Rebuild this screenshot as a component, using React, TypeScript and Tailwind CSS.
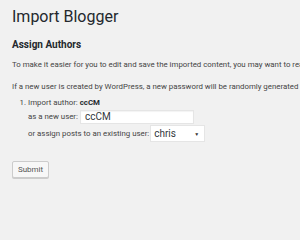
export default function App() {
  return (
    <div className="w-[300px] h-[240px] overflow-hidden bg-[#f1f1f1] text-[#444] font-['Roboto',sans-serif]">
      <div className="pl-3 pt-[7px]">
        <h1 className="text-[16px] leading-[20px] text-[#23282d] whitespace-nowrap">Import Blogger</h1>
        <h2 className="mt-[12px] text-[10px] leading-[12px] font-bold text-[#23282d] whitespace-nowrap">Assign Authors</h2>
        <p className="mt-[9px] text-[7.85px] leading-[10px] whitespace-nowrap overflow-hidden">
          To make it easier for you to edit and save the imported content, you may want to reassign the author of the imported item to an existing user of this site.
        </p>
        <p className="mt-[12px] text-[7.85px] leading-[10px] whitespace-nowrap overflow-hidden">
          If a new user is created by WordPress, a new password will be randomly generated and the new user's role will be set as subscriber.
        </p>
        <ol className="mt-[6px] pl-[16px] text-[7.85px] leading-[10px] list-decimal">
          <li className="whitespace-nowrap">
            Import author: <strong className="text-[#23282d]">ccCM</strong>
            <div className="mt-[2px] flex items-center gap-[2px]">
              <span>as a new user:</span>
              <div className="w-[114px] h-[14px] bg-white border border-[#e5e5e5] shadow-[inset_0_1px_1px_rgba(0,0,0,0.05)] flex items-center px-[4px] text-[10px] text-[#32373c]">
                ccCM
              </div>
            </div>
            <div className="mt-[1px] flex items-center gap-[1px]">
              <span>or assign posts to an existing user:</span>
              <div className="w-[55px] h-[17px] bg-white border border-[#e5e5e5] flex items-center justify-between px-[3px] text-[10px] text-[#32373c]">
                <span>chris</span>
                <span className="text-[5px] text-[#333] pr-[2px]">▼</span>
              </div>
            </div>
          </li>
        </ol>
        <button className="mt-[19px] h-[17px] w-[37px] bg-[#f7f7f7] border border-[#ccc] rounded-[2px] shadow-[0_1px_0_#ccc] text-[8px] text-[#555] flex items-center justify-center">
          Submit
        </button>
      </div>
    </div>
  );
}
